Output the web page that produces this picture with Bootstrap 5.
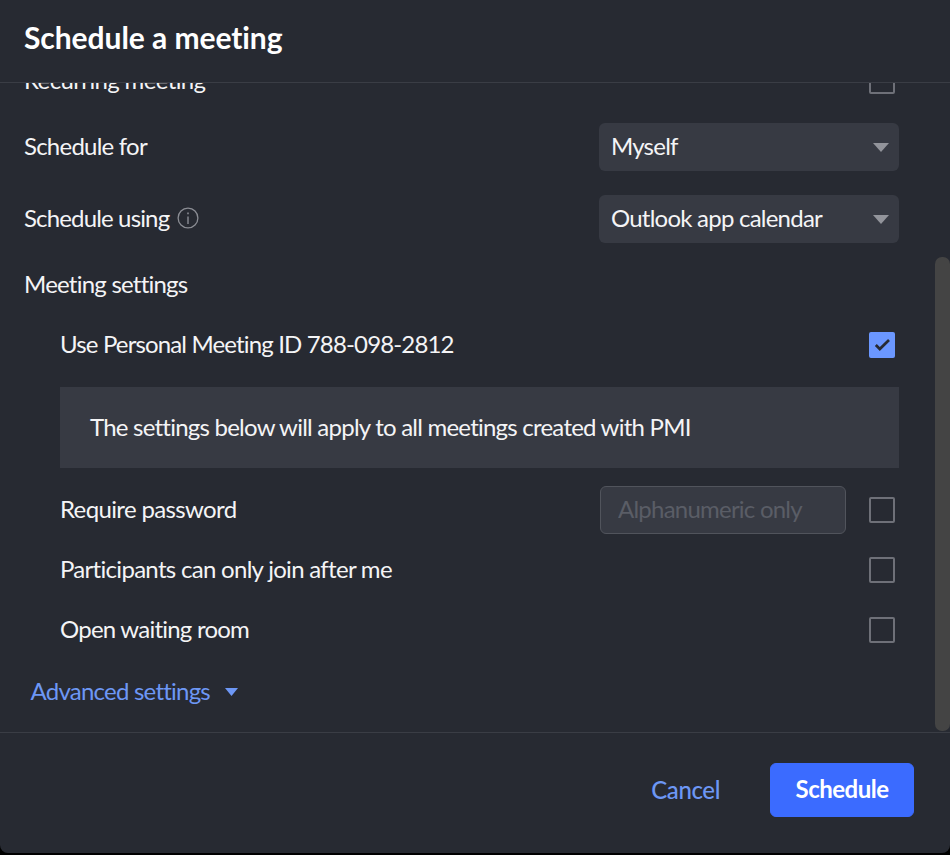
<!DOCTYPE html>
<html lang="en">
<head>
<meta charset="utf-8">
<title>Schedule a meeting</title>
<link rel="stylesheet" href="https://cdn.jsdelivr.net/npm/bootstrap@5.3.0/dist/css/bootstrap.min.css">
<style>
html,body{height:100%;margin:0;background:#000;overflow:hidden}
body{font-family:Lato,"Liberation Sans",sans-serif;color:#f4f4f6;font-size:24px;line-height:28px;letter-spacing:-.77px}
.dlg{height:853px;background:#272a32;border-radius:0 0 8px 8px;display:flex;flex-direction:column;position:relative;overflow:hidden}
.dlg-head{height:83px;flex:none;border-bottom:1px solid #3a3d45;padding:0 24px;display:flex;align-items:center}
.dlg-head h1{font-size:30px;line-height:36px;font-weight:700;color:#fff;margin:-8px 0 0;letter-spacing:-.06px}
.dlg-body{height:650px;flex:none;overflow:hidden;border-bottom:1px solid #3a3d45;padding:0 51px 0 24px}
.flow{margin-top:-26px}
.line{height:48px;display:flex;align-items:center;justify-content:space-between}
.line>span:first-child,.picker>span{margin-bottom:2px}
.m18{margin-top:18px}.m24{margin-top:24px}.m12{margin-top:12px}.m14{margin-top:14px}
.indent{margin-left:36px}
.tight{letter-spacing:-.85px}
.loose{letter-spacing:-.64px}
.mid{letter-spacing:-.7px}
.picker{width:300px;height:48px;background:#373a43;border-radius:6px;padding:0 10px 0 12px;display:flex;align-items:center;justify-content:space-between;flex:none}
.tri{flex:none}
.form-check-input[type=checkbox].box{margin:0 4px 0 0;width:26px;height:26px;flex:none;border:2px solid #6e7078;border-radius:2px;background-color:transparent;float:none}
.form-check-input[type=checkbox].box:checked{background-color:#6b97ff;border-color:#6b97ff;--bs-form-check-bg-image:url("data:image/svg+xml,%3Csvg xmlns='http://www.w3.org/2000/svg' viewBox='0 0 22 22'%3E%3Cpath d='M4.8 11l4 4L18 6' fill='none' stroke='%23272a32' stroke-width='2.7'/%3E%3C/svg%3E");background-size:100% 100%}
.notice{height:81px;background:#373a43;padding:0 30px 2px;display:flex;align-items:center}
.pw{width:246px;height:48px;background:#373a43;border:1px solid #51545c;border-radius:6px;color:#f4f4f6;font-size:24px;padding:0 17px 3px;font-family:inherit;letter-spacing:inherit;margin-right:23px;box-shadow:none}
.pw::placeholder{color:#5a5d66;opacity:1}
.pw:focus{background:#373a43;border-color:#51545c;box-shadow:none;color:#f4f4f6}
.adv{color:#6d97f5;margin-left:6.5px;gap:15px}
.dlg-foot{flex:1;display:flex;align-items:center;justify-content:flex-end;padding:0 36px 6px 0}
.cancel-link{color:#6d97f5;font-size:24px;padding:0;border:0;background:none;margin-right:50px;font-weight:500;letter-spacing:-.4px}
.cancel-link:hover{color:#6d97f5}
.go{width:144px;height:54px;background:#3b6bff;border-color:#3b6bff;color:#fff;font-size:24px;font-weight:700;border-radius:6px;padding:0 0 2px;letter-spacing:-.5px}
.bar{position:absolute;right:0;top:257px;width:15px;height:474px;background:#444;border-radius:7px}
</style>
</head>
<body>
<div class="dlg">
  <div class="dlg-head"><h1>Schedule a meeting</h1></div>
  <div class="dlg-body">
    <div class="flow">
      <div class="line"><span class="loose">Recurring meeting</span><input class="form-check-input box" type="checkbox" aria-label="Recurring meeting"></div>
      <div class="line m18"><span>Schedule for</span>
        <div class="picker"><span>Myself</span><svg class="tri" width="16" height="9" viewBox="0 0 16 9"><path d="M0 0h16L8 9z" fill="#92949b"/></svg></div></div>
      <div class="line m24"><span class="d-flex align-items-center gap-2 tight">Schedule using
        <svg width="22" height="22" viewBox="0 0 22 22" fill="none" stroke="#8b8d94" stroke-width="1.3"><circle cx="11" cy="11" r="9.9"/><path d="M11 9.5v7.5" stroke-width="1.4"/><path d="M11 5.5v1.8" stroke-width="1.6"/></svg></span>
        <div class="picker"><span>Outlook app calendar</span><svg class="tri" width="16" height="9" viewBox="0 0 16 9"><path d="M0 0h16L8 9z" fill="#92949b"/></svg></div></div>
      <div class="line m18"><span>Meeting settings</span></div>
      <div class="indent">
        <div class="line m12"><span class="tight">Use Personal Meeting ID 788-098-2812</span><input class="form-check-input box" type="checkbox" checked aria-label="Use Personal Meeting ID"></div>
        <div class="notice m18">The settings below will apply to all meetings created with PMI</div>
        <div class="line m18"><span class="loose">Require password</span><span class="d-flex align-items-center"><input class="form-control pw" type="text" placeholder="Alphanumeric only"><input class="form-check-input box" type="checkbox" aria-label="Require password"></span></div>
        <div class="line m12"><span class="mid">Participants can only join after me</span><input class="form-check-input box" type="checkbox" aria-label="Participants can only join after me"></div>
        <div class="line m12"><span>Open waiting room</span><input class="form-check-input box" type="checkbox" aria-label="Open waiting room"></div>
      </div>
      <div class="line m14 justify-content-start adv"><span>Advanced settings</span><svg class="tri" width="13" height="8" viewBox="0 0 13 8"><path d="M0 0h13L6.5 8z" fill="#6d97f5"/></svg></div>
    </div>
  </div>
  <div class="dlg-foot">
    <button type="button" class="btn cancel-link">Cancel</button>
    <button type="button" class="btn btn-primary go">Schedule</button>
  </div>
  <div class="bar"></div>
</div>
<script src="https://cdn.jsdelivr.net/npm/bootstrap@5.3.0/dist/js/bootstrap.bundle.min.js"></script>
</body>
</html>
